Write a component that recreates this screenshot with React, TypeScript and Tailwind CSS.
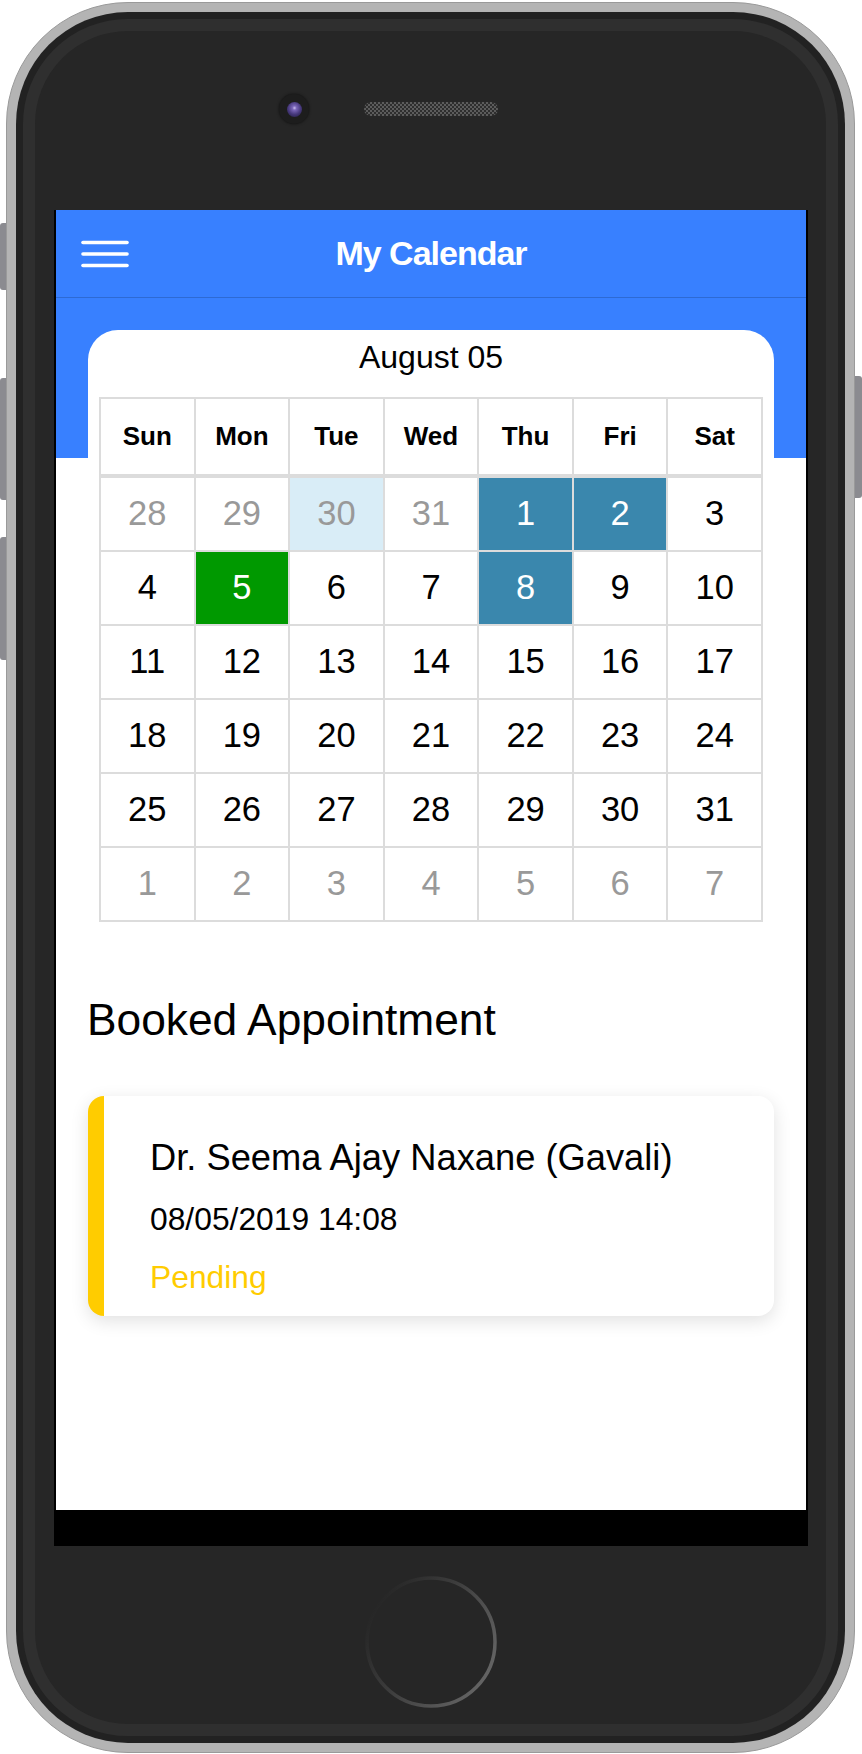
type Tone = "plain" | "muted" | "sel" | "event" | "today";

type Day = { d: number; tone: Tone };

const weekDays = ["Sun", "Mon", "Tue", "Wed", "Thu", "Fri", "Sat"];

const weeks: Day[][] = [
  [
    { d: 28, tone: "muted" },
    { d: 29, tone: "muted" },
    { d: 30, tone: "sel" },
    { d: 31, tone: "muted" },
    { d: 1, tone: "event" },
    { d: 2, tone: "event" },
    { d: 3, tone: "plain" },
  ],
  [
    { d: 4, tone: "plain" },
    { d: 5, tone: "today" },
    { d: 6, tone: "plain" },
    { d: 7, tone: "plain" },
    { d: 8, tone: "event" },
    { d: 9, tone: "plain" },
    { d: 10, tone: "plain" },
  ],
  [11, 12, 13, 14, 15, 16, 17].map((d) => ({ d, tone: "plain" as Tone })),
  [18, 19, 20, 21, 22, 23, 24].map((d) => ({ d, tone: "plain" as Tone })),
  [25, 26, 27, 28, 29, 30, 31].map((d) => ({ d, tone: "plain" as Tone })),
  [1, 2, 3, 4, 5, 6, 7].map((d) => ({ d, tone: "muted" as Tone })),
];

const toneClass: Record<Tone, string> = {
  plain: "bg-white text-black",
  muted: "bg-white text-[#999999]",
  sel: "bg-[#d9edf7] text-[#999999]",
  event: "bg-[#3a87ad] text-white",
  today: "bg-[#009900] text-white",
};

function MenuIcon() {
  return (
    <svg width="48" height="30" viewBox="0 0 48 30">
      <g stroke="#ffffff" strokeWidth="3.6" strokeLinecap="round">
        <line x1="2" y1="3.5" x2="46" y2="3.5" />
        <line x1="2" y1="15" x2="46" y2="15" />
        <line x1="2" y1="26.5" x2="46" y2="26.5" />
      </g>
    </svg>
  );
}

function HomeButton() {
  return (
    <svg width="134" height="134" viewBox="0 0 134 134">
      <defs>
        <linearGradient id="ring" x1="0" y1="0.25" x2="1" y2="0.85">
          <stop offset="0" stopColor="#242424" />
          <stop offset="0.4" stopColor="#3c3c3c" />
          <stop offset="1" stopColor="#6a6a6a" />
        </linearGradient>
      </defs>
      <circle cx="67" cy="67" r="64" fill="none" stroke="url(#ring)" strokeWidth="3.5" />
    </svg>
  );
}

function Calendar() {
  return (
    <div className="mx-[32px] mt-[32px] rounded-t-[30px] bg-white px-[11px] pt-[7px]">
      <p className="text-center text-[32px] leading-[40px] text-black mb-[20px]">August 05</p>
      <div className="bg-[#dcdcdc] p-[2px]">
        <div className="grid grid-cols-7 gap-x-[2px]">
          {weekDays.map((w) => (
            <div key={w} className="h-[75px] bg-white flex items-center justify-center font-bold text-[26px] text-black">
              {w}
            </div>
          ))}
        </div>
        <div className="mt-[4px] grid grid-cols-7 gap-[2px]">
          {weeks.flat().map((c, i) => (
            <div
              key={i}
              className={`h-[72px] flex items-center justify-center text-[34.5px] ${toneClass[c.tone]}`}
            >
              {c.d}
            </div>
          ))}
        </div>
      </div>
    </div>
  );
}

function Appointment() {
  return (
    <div className="mt-[50px] mx-[32px] rounded-[16px] bg-white border-l-[16px] border-[#ffcc00] shadow-[0_5px_18px_rgba(0,0,0,0.12)] pl-[46px] pt-[42px] pb-[21px]">
      <p className="text-[36.3px] leading-[40px] text-black">Dr. Seema Ajay Naxane (Gavali)</p>
      <p className="mt-[23px] text-[31.8px] leading-[36px] text-black">08/05/2019 14:08</p>
      <p className="mt-[22px] text-[31.8px] leading-[36px] text-[#ffcc00]">Pending</p>
    </div>
  );
}

export default function App() {
  return (
    <div className="relative w-[862px] h-[1754px] bg-white overflow-hidden pt-[2px] pl-[6px] font-['Liberation_Sans',Arial,sans-serif]">
      {/* side buttons */}
      <div className="absolute left-0 top-[223px] w-[8px] h-[67px] rounded-l-[3px] bg-[#8b8b90]" />
      <div className="absolute left-0 top-[378px] w-[8px] h-[122px] rounded-l-[3px] bg-[#8b8b90]" />
      <div className="absolute left-0 top-[537px] w-[8px] h-[123px] rounded-l-[3px] bg-[#8b8b90]" />
      <div className="absolute left-[853px] top-[376px] w-[9px] h-[122px] rounded-r-[3px] bg-[#8b8b90]" />

      <div className="relative w-[849px] h-[1751px] rounded-[122px] bg-[#b4b4b4] border border-[#9a9a9a] p-[9px]">
        <div className="h-full rounded-[112px] bg-[#222222] p-[7px]">
          <div className="h-full rounded-[105px] border-[12px] border-[#2f2f2f] bg-[#262626] flex flex-col">
            <div className="h-[179px] pt-[63px] pl-[244px]">
              <div className="flex items-center gap-[55px] h-[30px]">
                <div className="w-[30px] h-[30px] rounded-full bg-[#1d1d1d] flex items-center justify-center shadow-[0_0_3px_rgba(0,0,0,0.6)]">
                  <div className="w-[15px] h-[15px] rounded-full bg-[radial-gradient(circle_at_50%_40%,#cbbef0_0,#7a66b8_18%,#45377a_55%,#1f1a3a_100%)]" />
                </div>
                <div className="w-[134px] h-[14px] rounded-full bg-[repeating-conic-gradient(#5c5c5c_0_25%,#2e2e2e_0_50%)] bg-[length:4px_4px]" />
              </div>
            </div>

            <div className="ml-[19px] w-[754px] bg-black">
              <div className="ml-[2px] w-[750px] h-[1300px] bg-white flex flex-col">
                <header className="h-[88px] bg-[#3880ff] border-b border-[#2d6ad4] grid grid-cols-[100px_1fr_100px] items-center">
                  <div className="pl-[25px] flex items-center">
                    <MenuIcon />
                  </div>
                  <h1 className="text-center text-white font-bold text-[34px] tracking-[-1px]">My Calendar</h1>
                  <div />
                </header>
                <div className="bg-[linear-gradient(to_bottom,#3880ff_160px,#ffffff_160px)]">
                  <Calendar />
                </div>
                <h2 className="mt-[72px] pl-[31px] text-[44.3px] leading-[52px] text-black">Booked Appointment</h2>
                <Appointment />
              </div>
              <div className="h-[36px]" />
            </div>

            <div className="flex-1 flex justify-center pt-[29px]">
              <HomeButton />
            </div>
          </div>
        </div>
      </div>
    </div>
  );
}
